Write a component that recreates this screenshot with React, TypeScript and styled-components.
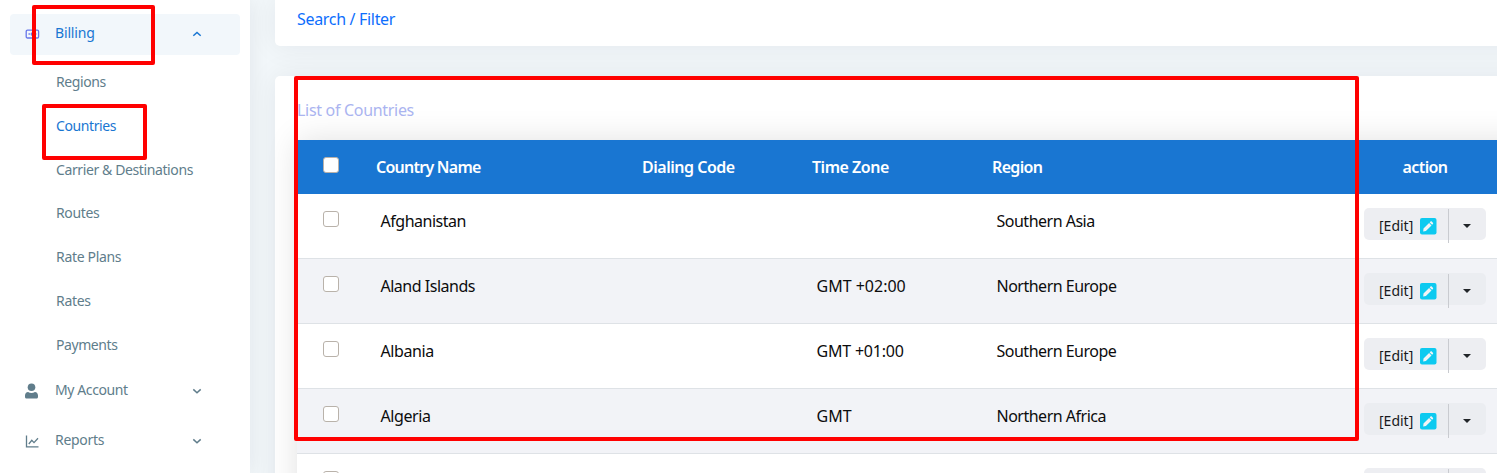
import React from "react";
import styled, { createGlobalStyle } from "styled-components";

const GlobalStyle = createGlobalStyle`
  *, *::before, *::after { box-sizing: border-box; }
  body { margin: 0; overflow: hidden; background: #f2f7fa; }
`;

const Page = styled.div`
  position: relative;
  display: flex;
  width: 1497px;
  height: 473px;
  overflow: hidden;
  font-family: "Noto Sans", sans-serif;
  font-size: 16px;
  color: #0c0c0d;
`;

const Label = styled.span<{ $track?: number }>`
  white-space: nowrap;
  letter-spacing: ${(p) => p.$track ?? 0}px;
`;

const NavLabel = styled(Label)`
  padding-bottom: 2px;
`;

const Sidebar = styled.nav`
  flex: none;
  z-index: 1;
  width: 250px;
  padding: 14px 10px 0;
  background: #fff;
  box-shadow: 0 0 20px rgba(1, 20, 40, 0.08);
  font-size: 14px;
  color: #607d8b;
`;

const NavItem = styled.div<{ $active?: boolean; $height: number }>`
  display: grid;
  grid-template-columns: 45px 1fr 48px;
  align-items: center;
  height: ${(p) => p.$height}px;
  border-radius: 4px;
  background: ${(p) => (p.$active ? "#f2f7fb" : "transparent")};
  color: ${(p) => (p.$active ? "#1976d2" : "inherit")};
  padding-bottom: 2px;
`;

const NavIcon = styled.span`
  display: flex;
  padding-left: 14px;
`;

const SubMenu = styled.div`
  display: flex;
  flex-direction: column;
  padding: 4.6px 0 0.4px 46px;
`;

const SubItem = styled.div<{ $active?: boolean }>`
  display: flex;
  align-items: center;
  height: 43.8px;
  color: ${(p) => (p.$active ? "#1976d2" : "inherit")};
`;

const Main = styled.main`
  flex: 1;
  min-width: 0;
  padding-left: 25px;
  display: flex;
  flex-direction: column;
  gap: 30px;
`;

const FilterCard = styled.section`
  flex: none;
  height: 46px;
  width: 1260px;
  padding: 8px 22px;
  border-radius: 0 0 5px 5px;
  background: #fff;
  box-shadow: 0 0 30px rgba(1, 20, 40, 0.07);
  color: #0d6efd;
`;

const ListCard = styled.section`
  flex: none;
  width: 1260px;
  height: 460px;
  padding-left: 22px;
  border-radius: 5px;
  background: #fff;
  box-shadow: 0 0 30px rgba(1, 20, 40, 0.07);
`;

const ListTitle = styled.h2`
  margin: 0;
  height: 64px;
  padding-top: 23px;
  font-size: 16px;
  line-height: 22px;
  font-weight: 400;
  color: #aab4f0;
`;

const Table = styled.div`
  background: #fff;
  box-shadow: 0 0 30px rgba(0, 0, 0, 0.12);
`;

const Row = styled.div<{ $striped?: boolean }>`
  display: grid;
  grid-template-columns: 74px 266px 170px 180px 372px 132px;
  height: 65px;
  border-bottom: 1px solid #dee2e6;
  background: ${(p) => (p.$striped ? "#f2f3f7" : "#fff")};
`;

const HeaderRow = styled(Row)`
  height: 54px;
  border: 0;
  background: #1976d2;
  color: #fff;
  font-weight: 650;
`;

const HeadCell = styled.div<{ $center?: boolean }>`
  padding: 16px 0 0 ${(p) => (p.$center ? 0 : 5)}px;
  text-align: ${(p) => (p.$center ? "center" : "left")};
  line-height: 22px;
`;

const Cell = styled.div`
  padding: 16px 0 0 9.5px;
  line-height: 22px;
`;

const CheckCell = styled.div`
  padding: 17px 0 0 26px;
`;

const Check = styled.input.attrs({ type: "checkbox" })`
  display: block;
  appearance: none;
  width: 16px;
  height: 16px;
  margin: 0;
  border: 1px solid #b9b2aa;
  border-radius: 3px;
  background: #fff;
`;

const ActionCell = styled.div`
  padding: 14px 0 0 5px;
`;

const SplitButton = styled.div<{ $striped?: boolean }>`
  display: flex;
  width: 122px;
  height: 32px;
  border-radius: 5px;
  background: ${(p) => (p.$striped ? "#ebedf1" : "#edeef2")};
  font-size: 14px;
`;

const EditPart = styled.button`
  display: flex;
  align-items: center;
  gap: 7px;
  width: 84px;
  padding: 4px 0 0 15px;
  border: 0;
  background: none;
  font: inherit;
  color: #17191c;
`;

const EditLabel = styled(Label)`
  padding-bottom: 1px;
`;

const TogglePart = styled.button`
  display: flex;
  align-items: center;
  justify-content: center;
  width: 38px;
  height: 34px;
  margin-top: 1px;
  padding: 0 2px 0 0;
  border: 0;
  border-left: 1px solid #c9cbd0;
  background: none;
`;

const Highlight = styled.div<{ $x: number; $y: number; $w: number; $h: number }>`
  position: absolute;
  z-index: 2;
  left: ${(p) => p.$x}px;
  top: ${(p) => p.$y}px;
  width: ${(p) => p.$w}px;
  height: ${(p) => p.$h}px;
  border: 4px solid #f00;
  border-radius: 2px;
  pointer-events: none;
`;

const Chevron = ({ up }: { up?: boolean }) => (
  <svg width="10" height="8" viewBox="0 0 10 8" fill="none" stroke="currentColor" strokeWidth="1.5">
    <path d={up ? "M1.3 5.8 5 2.4l3.7 3.4" : "M1.3 2.4 5 5.8l3.7-3.4"} />
  </svg>
);

const CashIcon = () => (
  <svg width="16" height="10" viewBox="0 0 16 10" fill="none" stroke="#6576ea" strokeWidth="1.3">
    <rect x="2.2" y="1.2" width="12.4" height="7.8" rx="1.3" />
    <path d="M4.5 5h1.4M11 5h1.4" />
    <circle cx="8.4" cy="5" r="1.2" />
  </svg>
);

const UserIcon = () => (
  <svg width="15" height="16" viewBox="0 0 15 16" fill="currentColor">
    <circle cx="7.5" cy="4.2" r="3.8" />
    <path d="M1 12.6C1 10.6 2.3 9.2 4.1 9c1 .6 2.1.9 3.4.9s2.4-.3 3.4-.9c1.8.2 3.1 1.6 3.1 3.6v1.3c0 .9-.6 1.5-1.5 1.5h-10C1.6 15.4 1 14.8 1 13.9Z" />
  </svg>
);

const ChartIcon = () => (
  <svg width="15" height="14" viewBox="0 0 15 14" fill="none" stroke="currentColor" strokeWidth="1.3">
    <path d="M2.5 1.5v11.3h12" />
    <path d="m4.800 10 3-3.700 2.200 2.300 4-4.300" />
  </svg>
);

const EditIcon = () => (
  <svg width="17" height="17" viewBox="0 0 17 17">
    <rect width="16.5" height="16.5" rx="2" fill="#0dcaf0" />
    <path fill="#f2f3f5" d="m3.5 10.6 5.6-5.6 2.4 2.4-5.6 5.6-2.7.4zM9.7 4.4l.8-.8c.4-.4.9-.4 1.3 0l1.1 1.1c.4.4.4.9 0 1.3l-.8.8z" />
  </svg>
);

const CaretIcon = () => (
  <svg width="8" height="4" viewBox="0 0 8 4" fill="#212529">
    <path d="M0 0h8L4 4z" />
  </svg>
);

const subItems = [
  { name: "Regions", track: -0.4 },
  { name: "Countries", track: -0.4, active: true },
  { name: "Carrier & Destinations", track: -0.39 },
  { name: "Routes", track: -0.35 },
  { name: "Rate Plans", track: -0.32 },
  { name: "Rates", track: -0.3 },
  { name: "Payments", track: -0.43 },
];

const countries = [
  { name: "Afghanistan", zone: "", region: "Southern Asia", track: -0.48 },
  { name: "Aland Islands", zone: "GMT +02:00", region: "Northern Europe", track: -0.49 },
  { name: "Albania", zone: "GMT +01:00", region: "Southern Europe", track: -0.42, zoneTrack: -0.2 },
  { name: "Algeria", zone: "GMT", region: "Northern Africa", track: -0.4 },
  { name: "", zone: "", region: "" },
];

export default function App() {
  return (
    <Page>
      <GlobalStyle />
      <Sidebar>
        <NavItem $active $height={41}>
          <NavIcon><CashIcon /></NavIcon>
          <NavLabel $track={-0.15}>Billing</NavLabel>
          <Chevron up />
        </NavItem>
        <SubMenu>
          {subItems.map((s) => (
            <SubItem key={s.name} $active={s.active}>
              <Label $track={s.track}>{s.name}</Label>
            </SubItem>
          ))}
        </SubMenu>
        <NavItem $height={50}>
          <NavIcon><UserIcon /></NavIcon>
          <NavLabel $track={-0.4}>My Account</NavLabel>
          <Chevron />
        </NavItem>
        <NavItem $height={50}>
          <NavIcon><ChartIcon /></NavIcon>
          <NavLabel $track={-0.3}>Reports</NavLabel>
          <Chevron />
        </NavItem>
      </Sidebar>
      <Main>
        <FilterCard><Label $track={-0.32}>Search / Filter</Label></FilterCard>
        <ListCard>
          <ListTitle><Label $track={-0.31}>List of Countries</Label></ListTitle>
          <Table>
            <HeaderRow>
              <CheckCell><Check /></CheckCell>
              <HeadCell><Label $track={-0.75}>Country Name</Label></HeadCell>
              <HeadCell><Label $track={-0.48}>Dialing Code</Label></HeadCell>
              <HeadCell><Label $track={-0.48}>Time Zone</Label></HeadCell>
              <HeadCell><Label $track={-0.65}>Region</Label></HeadCell>
              <HeadCell $center><Label $track={-0.6}>action</Label></HeadCell>
            </HeaderRow>
            {countries.map((c, i) => (
              <Row key={i} $striped={i % 2 === 1}>
                <CheckCell><Check /></CheckCell>
                <Cell><Label $track={c.track}>{c.name}</Label></Cell>
                <Cell />
                <Cell><Label $track={c.zoneTrack}>{c.zone}</Label></Cell>
                <Cell><Label $track={-0.5}>{c.region}</Label></Cell>
                <ActionCell>
                  <SplitButton $striped={i % 2 === 1}>
                    <EditPart>{c.name && <><EditLabel>[Edit]</EditLabel><EditIcon /></>}</EditPart>
                    <TogglePart><CaretIcon /></TogglePart>
                  </SplitButton>
                </ActionCell>
              </Row>
            ))}
          </Table>
        </ListCard>
      </Main>
      <Highlight $x={32} $y={5} $w={123} $h={60} />
      <Highlight $x={42} $y={104} $w={105} $h={56} />
      <Highlight $x={294} $y={76} $w={1065} $h={365} />
    </Page>
  );
}
